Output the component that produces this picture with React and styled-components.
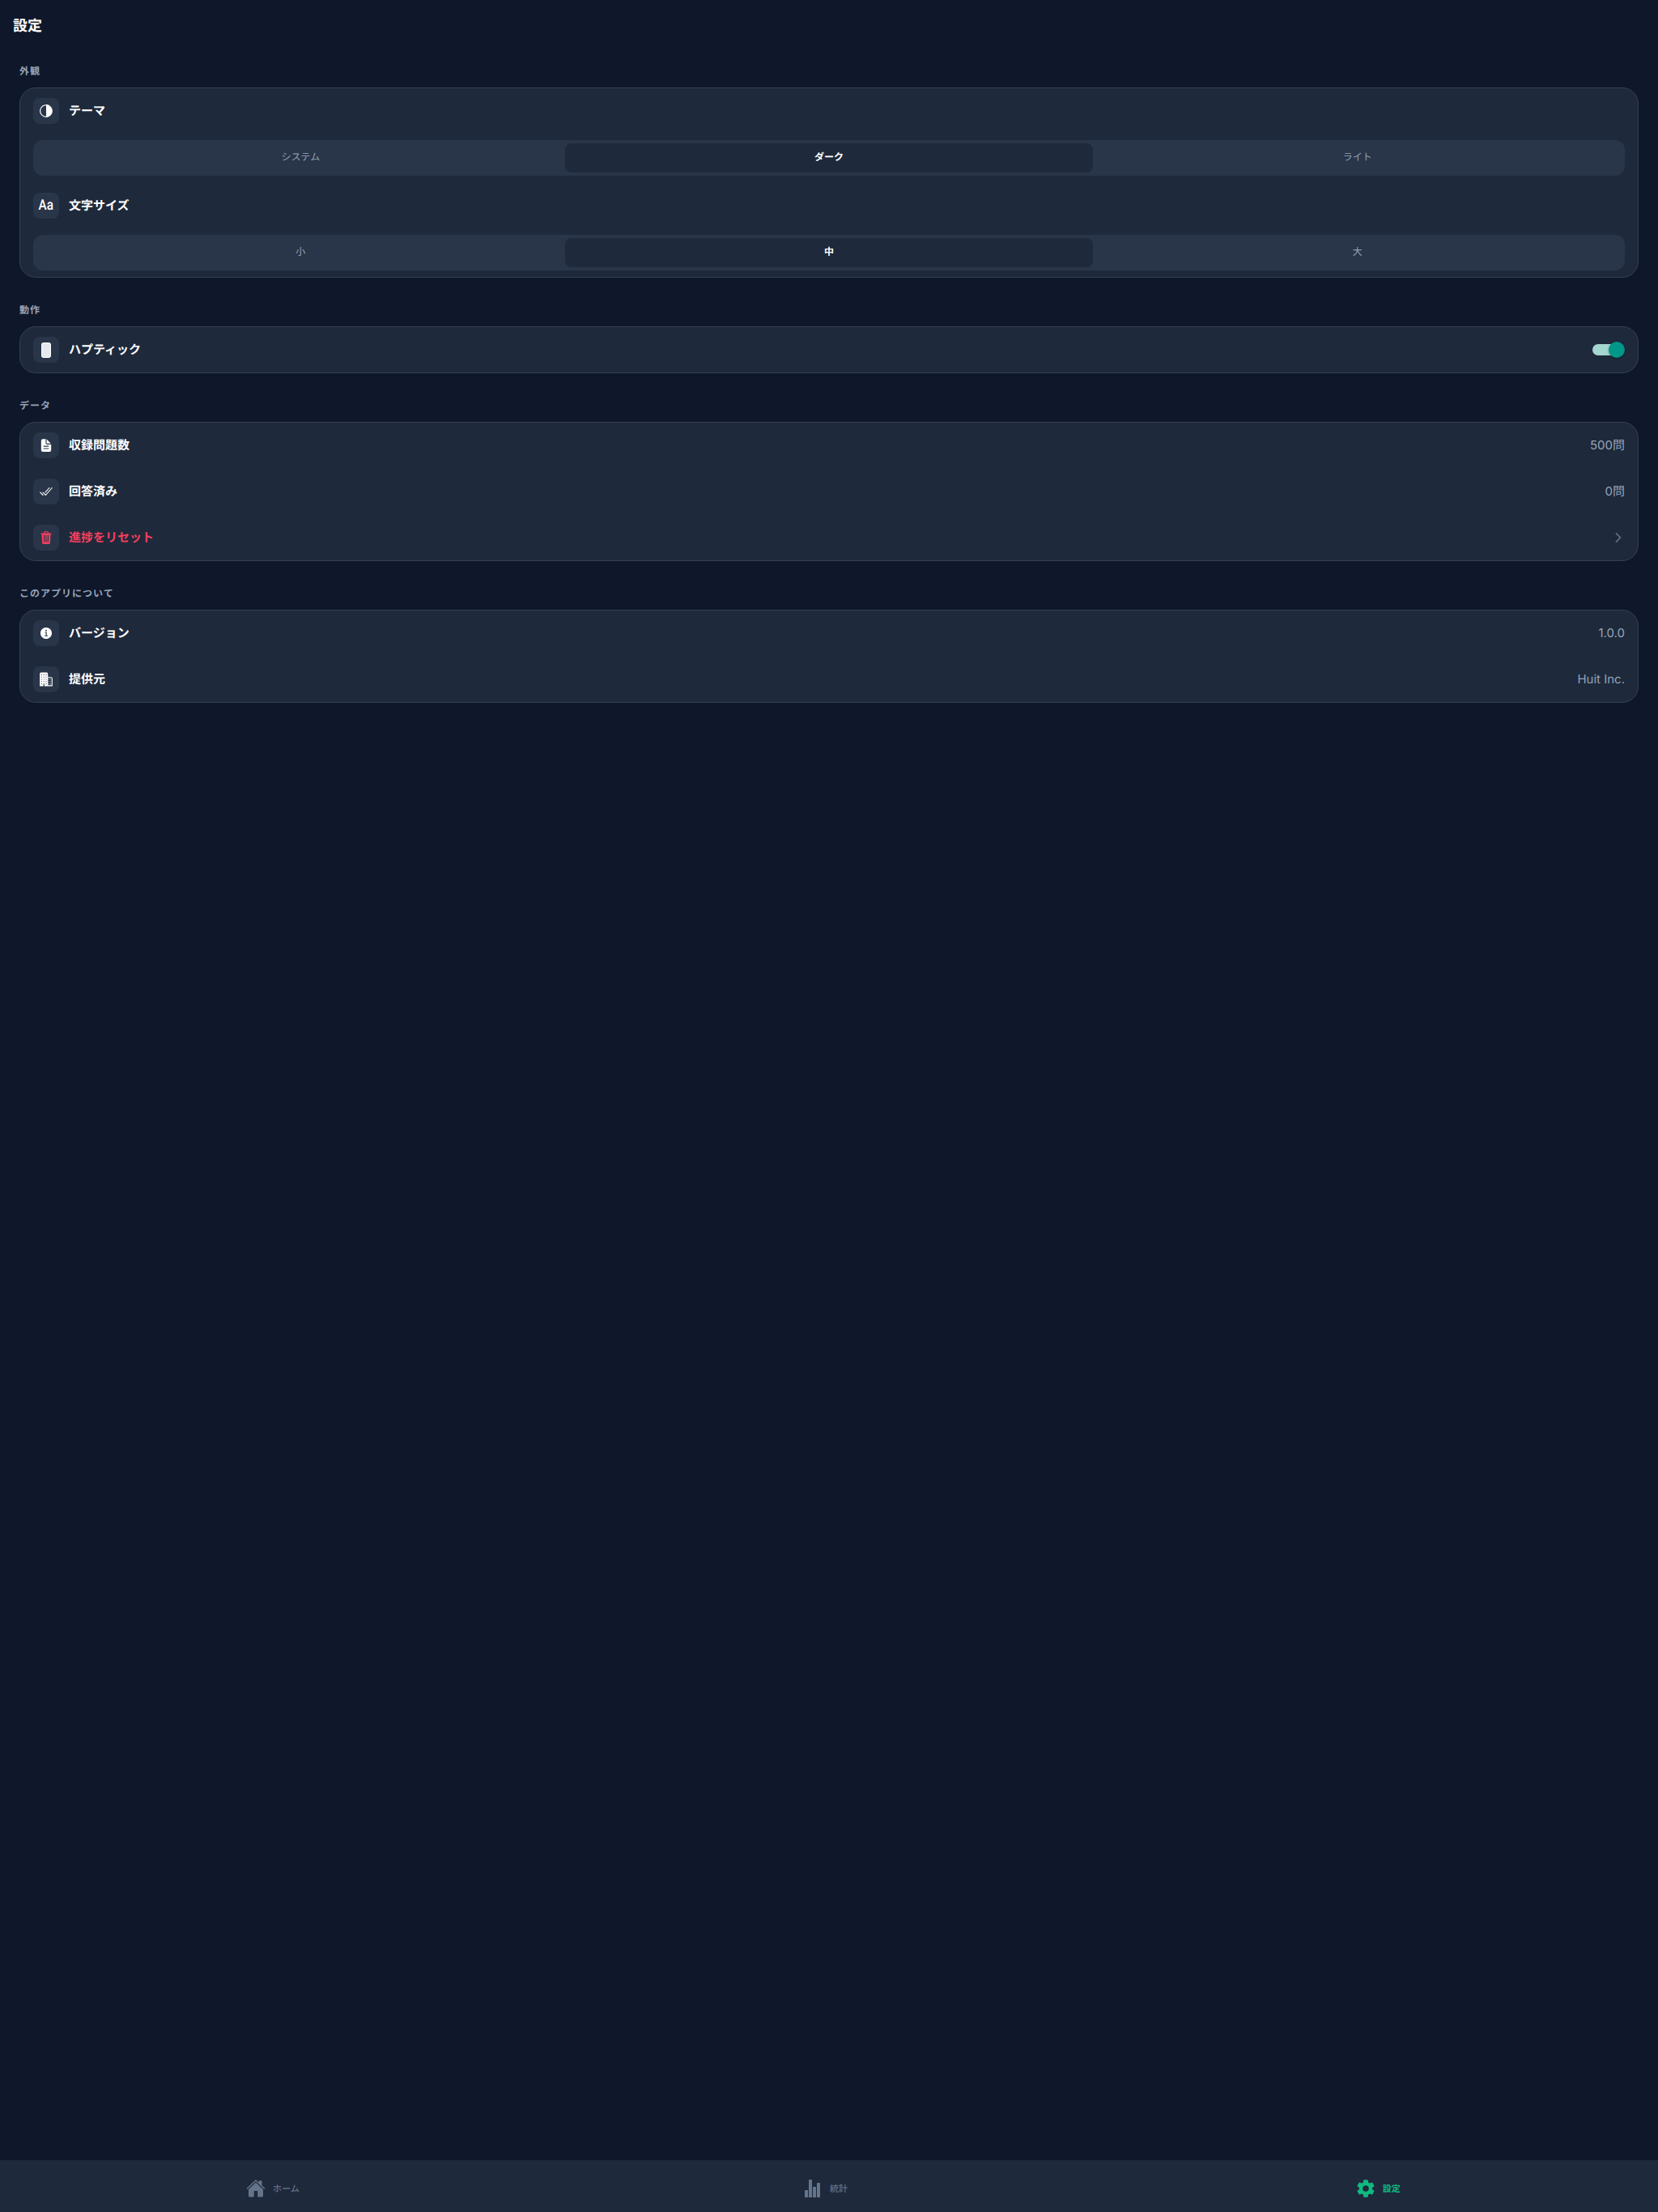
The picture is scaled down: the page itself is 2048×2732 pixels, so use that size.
import React from 'react';
import styled, { createGlobalStyle } from 'styled-components';
import {
  IoContrast,
  IoDocumentText,
  IoCheckmarkDone,
  IoTrash,
  IoChevronForward,
  IoInformationCircle,
  IoBusiness,
  IoHome,
  IoSettingsSharp,
} from 'react-icons/io5';

const GlobalStyle = createGlobalStyle`
  html, body { margin: 0; padding: 0; background: #0f172a; }
  * { box-sizing: border-box; }
  body { font-family: Inter, "Noto Sans CJK JP", sans-serif; text-rendering: geometricPrecision; }
`;

const Page = styled.div`
  width: 2048px;
  height: 2732px;
  display: flex;
  flex-direction: column;
  background: #0f172a;
`;

const Header = styled.header`
  height: 64px;
  padding: 0 16px 3px;
  display: flex;
  align-items: center;
  font-size: 18px;
  font-weight: 700;
  color: #fff;
`;

const Content = styled.main`
  flex: 1;
  padding: 14px 24px 0;
  display: flex;
  flex-direction: column;
  gap: 30px;
`;

const SectionTitle = styled.h2`
  margin: 0 0 11px;
  height: 19px;
  padding-top: 1px;
  line-height: 18px;
  font-size: 12px;
  font-weight: 700;
  letter-spacing: 1px;
  color: #94a3b8;
`;

const Card = styled.div`
  border: 1px solid #334155;
  border-radius: 20px;
  background: #1e293b;
  display: flex;
  flex-direction: column;
  gap: 1px;
`;

const Group = styled.div`
  display: flex;
  flex-direction: column;
`;

const Row = styled.div`
  height: 56px;
  padding: 0 16px;
  display: flex;
  align-items: center;
  gap: 12px;
`;

const IconBox = styled.span`
  width: 32px;
  height: 32px;
  flex: none;
  border-radius: 8px;
  background: #293548;
  display: flex;
  align-items: center;
  justify-content: center;
  font-size: 18px;
  color: ${props => props.$danger ? '#f43f5e' : '#fff'};
`;

const AaGlyph = styled.span`
  font-family: Roboto, sans-serif;
  font-size: 18px;
  font-weight: 500;
  line-height: 1;
  transform: scaleX(0.85);
`;

const Label = styled.span`
  flex: 1;
  padding-bottom: 1px;
  font-size: 15px;
  font-weight: 700;
  color: ${props => props.$danger ? '#f43f5e' : '#fff'};
`;

const Value = styled.span`
  padding-bottom: 1px;
  font-size: 15px;
  color: #94a3b8;
`;

const Chevron = styled(IoChevronForward)`
  font-size: 18px;
  color: #64748b;
  margin-right: -1px;
`;

const SegmentWrap = styled.div`
  padding: 8px 16px;
`;

const Segment = styled.div`
  height: 44px;
  padding: 4px;
  border-radius: 12px;
  background: #293548;
  display: grid;
  grid-template-columns: repeat(3, 1fr);
`;

const SegmentItem = styled.div`
  padding-bottom: 3px;
  border-radius: 8px;
  display: flex;
  align-items: center;
  justify-content: center;
  font-size: 12px;
  font-weight: ${props => props.$active ? 700 : 400};
  color: ${props => props.$active ? '#fff' : '#94a3b8'};
  background: ${props => props.$active ? '#1e293b' : 'transparent'};
`;

const Toggle = styled.span`
  position: relative;
  width: 40px;
  height: 20px;
  flex: none;
  display: block;
`;

const ToggleTrack = styled.span`
  position: absolute;
  left: 0;
  top: 3px;
  width: 34px;
  height: 14px;
  border-radius: 7px;
  background: #a3d6cf;
`;

const ToggleThumb = styled.span`
  position: absolute;
  right: 0;
  top: 0;
  width: 20px;
  height: 20px;
  border-radius: 50%;
  background: #009688;
  box-shadow: 0 1px 3px rgba(0, 0, 0, 0.35);
`;

const TabBar = styled.nav`
  height: 64px;
  flex: none;
  padding-top: 6px;
  background: #1e293b;
  display: grid;
  grid-template-columns: repeat(3, 1fr);
`;

const Tab = styled.div`
  display: flex;
  align-items: center;
  justify-content: center;
  gap: 9px;
  padding-right: 9px;
  color: ${props => props.$active ? '#10b981' : '#64748b'};
  font-size: 24px;
`;

const TabLabel = styled.span`
  font-size: 11px;
  font-weight: ${props => props.$active ? 700 : 500};
`;

const PhoneIcon = () => (
  <svg width="12" height="19" viewBox="0 0 12 19">
    <rect x="0.5" y="0.5" width="11" height="18" rx="2" fill="#e4e9ef" stroke="#fff" />
  </svg>
);

const StatsIcon = () => (
  <svg width="24" height="24" viewBox="0 0 24 24" fill="currentColor">
    <rect x="2" y="14" width="4" height="9" />
    <rect x="7" y="1" width="4" height="22" />
    <rect x="12" y="10" width="4" height="13" />
    <rect x="17" y="5" width="4" height="18" />
  </svg>
);

const SegmentControl = ({ items, active }) => (
  <SegmentWrap>
    <Segment>
      {items.map(item => (
        <SegmentItem key={item} $active={item === active}>{item}</SegmentItem>
      ))}
    </Segment>
  </SegmentWrap>
);

const App = () => (
  <Page>
    <GlobalStyle />
    <Header>設定</Header>
    <Content>
      <section>
        <SectionTitle>外観</SectionTitle>
        <Card>
          <Group>
            <Row>
              <IconBox><IoContrast /></IconBox>
              <Label>テーマ</Label>
            </Row>
            <SegmentControl items={['システム', 'ダーク', 'ライト']} active="ダーク" />
          </Group>
          <Group>
            <Row>
              <IconBox><AaGlyph>Aa</AaGlyph></IconBox>
              <Label>文字サイズ</Label>
            </Row>
            <SegmentControl items={['小', '中', '大']} active="中" />
          </Group>
        </Card>
      </section>

      <section>
        <SectionTitle>動作</SectionTitle>
        <Card>
          <Row>
            <IconBox><PhoneIcon /></IconBox>
            <Label>ハプティック</Label>
            <Toggle>
              <ToggleTrack />
              <ToggleThumb />
            </Toggle>
          </Row>
        </Card>
      </section>

      <section>
        <SectionTitle>データ</SectionTitle>
        <Card>
          <Row>
            <IconBox><IoDocumentText /></IconBox>
            <Label>収録問題数</Label>
            <Value>500問</Value>
          </Row>
          <Row>
            <IconBox><IoCheckmarkDone /></IconBox>
            <Label>回答済み</Label>
            <Value>0問</Value>
          </Row>
          <Row>
            <IconBox $danger><IoTrash /></IconBox>
            <Label $danger>進捗をリセット</Label>
            <Chevron />
          </Row>
        </Card>
      </section>

      <section>
        <SectionTitle>このアプリについて</SectionTitle>
        <Card>
          <Row>
            <IconBox><IoInformationCircle /></IconBox>
            <Label>バージョン</Label>
            <Value>1.0.0</Value>
          </Row>
          <Row>
            <IconBox><IoBusiness /></IconBox>
            <Label>提供元</Label>
            <Value>Huit Inc.</Value>
          </Row>
        </Card>
      </section>
    </Content>
    <TabBar>
      <Tab>
        <IoHome />
        <TabLabel>ホーム</TabLabel>
      </Tab>
      <Tab>
        <StatsIcon />
        <TabLabel>統計</TabLabel>
      </Tab>
      <Tab $active>
        <IoSettingsSharp />
        <TabLabel $active>設定</TabLabel>
      </Tab>
    </TabBar>
  </Page>
);

export default App;
